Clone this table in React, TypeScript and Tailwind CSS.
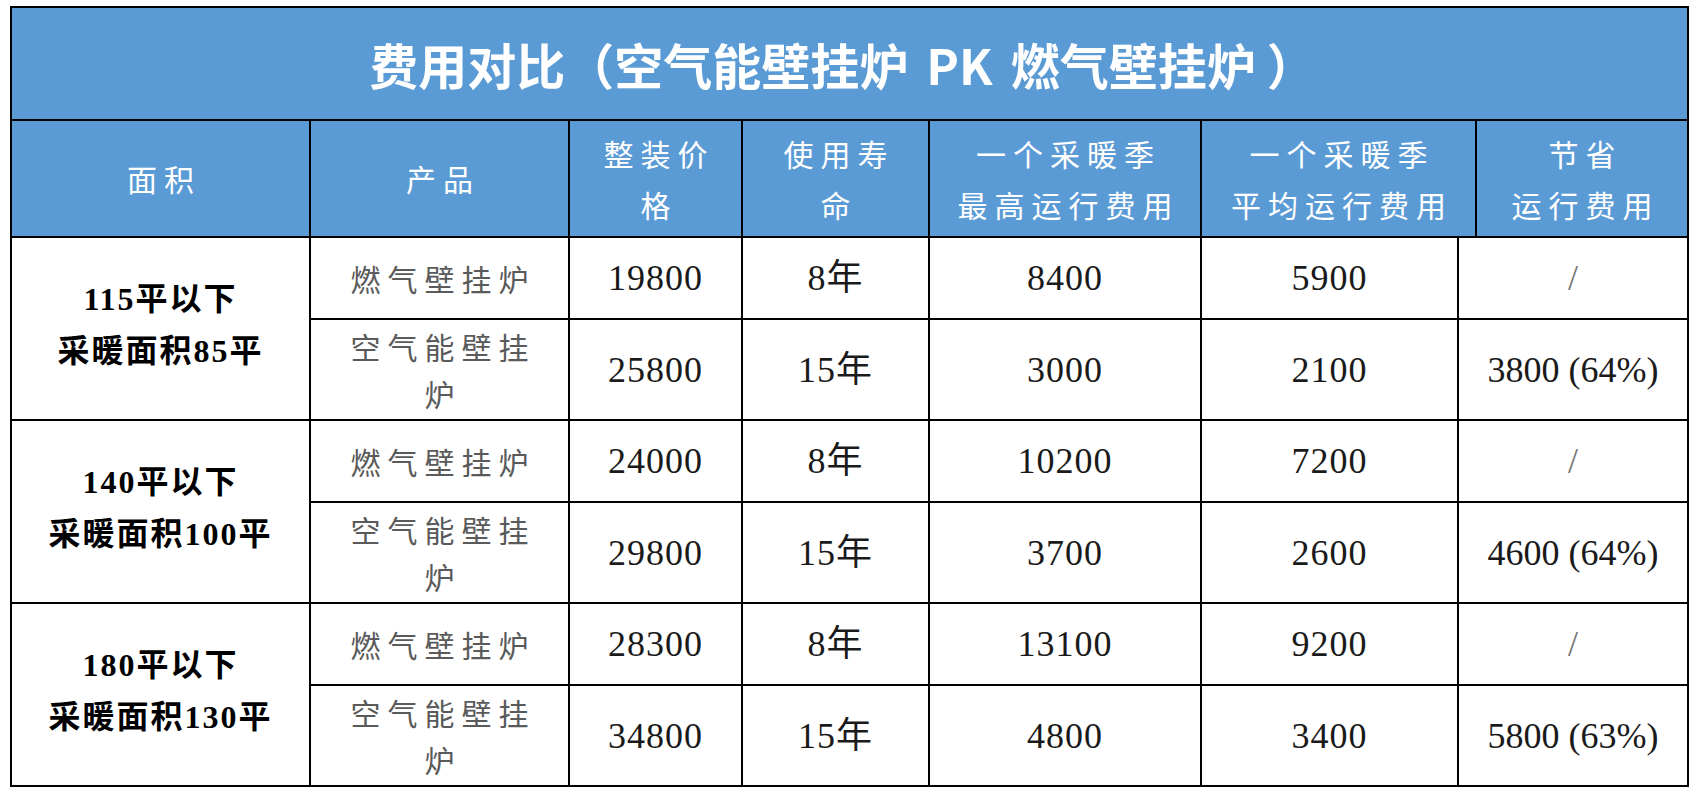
const rows = [
  { area: ["115平以下", "采暖面积85平"], gas: ["19800", "8年", "8400", "5900", "/"], air: ["25800", "15年", "3000", "2100", "3800 (64%)"] },
  { area: ["140平以下", "采暖面积100平"], gas: ["24000", "8年", "10200", "7200", "/"], air: ["29800", "15年", "3700", "2600", "4600 (64%)"] },
  { area: ["180平以下", "采暖面积130平"], gas: ["28300", "8年", "13100", "9200", "/"], air: ["34800", "15年", "4800", "3400", "5800 (63%)"] },
];

const cjk = "font-['Noto_Sans_CJK_SC',sans-serif]";
const num = "font-['Liberation_Serif','Noto_Sans_CJK_SC',serif]";

function NumCell({ v, span, last }: { v: string; span?: number; last?: boolean }) {
  // numbers are serif, the 年 falls back to the CJK face
  const slash = v === "/";
  return (
    <td
      colSpan={span}
      className={`border-2 border-black text-center text-[36px] ${last ? "tracking-[0px]" : "tracking-[1px]"} ${slash ? "text-[#777]" : "text-[#1a1a1a]"} ${num}`}
    >
      {v}
    </td>
  );
}

function BodyRows({ r }: { r: (typeof rows)[number] }) {
  return (
    <>
      <tr className="h-[82px]">
        <td rowSpan={2} className={`border-2 border-black text-center text-[32px] font-bold leading-[52px] tracking-[2px] pb-[8px] text-black ${num}`}>
          {r.area[0]}
          <br />
          {r.area[1]}
        </td>
        <td className={`border-2 border-black text-center text-[30px] tracking-[7px] pl-[7px] text-[#5a5a5a] ${cjk}`}>燃气壁挂炉</td>
        {r.gas.slice(0, 4).map((v, i) => (
          <NumCell key={i} v={v} />
        ))}
        <NumCell v={r.gas[4]} span={2} last />
      </tr>
      <tr className="h-[101px]">
        <td className={`border-2 border-black text-center text-[30px] leading-[47px] tracking-[7px] pl-[7px] text-[#5a5a5a] ${cjk}`}>
          空气能壁挂
          <br />炉
        </td>
        {r.air.slice(0, 4).map((v, i) => (
          <NumCell key={i} v={v} />
        ))}
        <NumCell v={r.air[4]} span={2} last />
      </tr>
    </>
  );
}

const head = `border-2 border-black bg-[#5b9bd5] text-white text-center text-[30px] leading-[51px] tracking-[7px] pl-[7px] ${cjk}`;

export default function App() {
  return (
    <div className="min-h-screen w-[1704px] bg-white pt-[6px] pl-[10px]">
      <table className="table-fixed border-collapse w-[1679px]">
        <colgroup>
          <col className="w-[299px]" />
          <col className="w-[259px]" />
          <col className="w-[173px]" />
          <col className="w-[187px]" />
          <col className="w-[272px]" />
          <col className="w-[257px]" />
          <col className="w-[18px]" />
          <col className="w-[212px]" />
        </colgroup>
        <tbody>
          <tr className="h-[113px]">
            <td colSpan={8} className={`border-2 border-black bg-[#5b9bd5] text-white text-center text-[49px] font-bold tracking-[0px] pr-[14px] ${cjk}`}>
              费用对比（空气能壁挂炉<span className="px-[18px]">PK</span>燃气壁挂炉 ）
            </td>
          </tr>
          <tr className="h-[117px]">
            <td className={head}>面积</td>
            <td className={head}>产品</td>
            <td className={head}>
              整装价
              <br />格
            </td>
            <td className={head}>
              使用寿
              <br />命
            </td>
            <td className={head}>
              一个采暖季
              <br />
              最高运行费用
            </td>
            <td colSpan={2} className={head}>
              一个采暖季
              <br />
              平均运行费用
            </td>
            <td className={head}>
              节省
              <br />
              运行费用
            </td>
          </tr>
          {rows.map((r, i) => (
            <BodyRows key={i} r={r} />
          ))}
        </tbody>
      </table>
    </div>
  );
}
